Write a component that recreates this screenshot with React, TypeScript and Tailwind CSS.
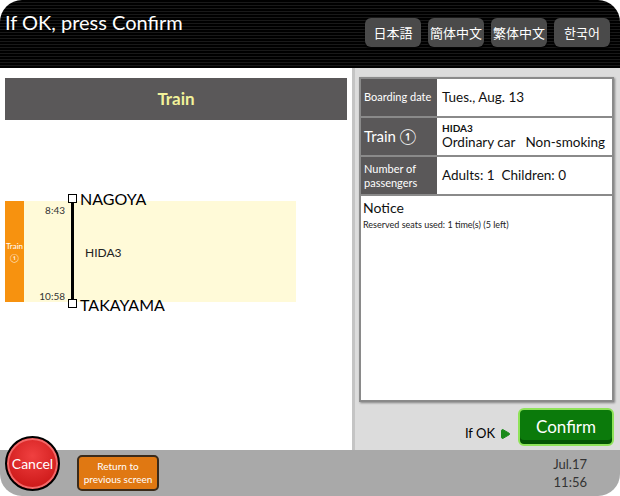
import { Play } from 'lucide-react'

const languages = ['日本語', '簡体中文', '繁体中文', '한국어']

function Header() {
  return (
    <div className="flex h-[68px] shrink-0 items-start justify-between rounded-t-[22px] bg-[repeating-linear-gradient(to_bottom,#000_0px,#000_2px,#191919_2px,#191919_3px)] pl-[5px] pr-[10px]">
      <h1 className="mt-[8px] text-[20px] leading-[28px] text-white">If OK, press Confirm</h1>
      <div className="mt-[18px] flex gap-[7px]">
        {languages.map((lang) => (
          <button
            key={lang}
            className="h-[29px] w-[56px] rounded-[6px] bg-[#4a4a4a] text-[13px] text-white shadow-[0_2px_2px_rgba(0,0,0,0.8)] font-['Noto_Sans_CJK_JP','Noto_Sans_CJK_KR',sans-serif]"
          >
            {lang}
          </button>
        ))}
      </div>
    </div>
  )
}

function Timeline() {
  return (
    <div className="mt-[81px] flex h-[101px]">
      <div className="flex w-[19px] flex-col items-center justify-center bg-[#f7920f] text-[8px] leading-[12px] text-white">
        <span>Train</span>
        <span>①</span>
      </div>
      <div className="relative w-[272px] bg-[#fffad8]">
        <span className="absolute left-0 top-[2px] w-[41px] text-right text-[10px] text-[#333]">8:43</span>
        <span className="absolute left-0 top-[88px] w-[41px] text-right text-[10px] text-[#333]">10:58</span>
        <div className="absolute left-[47px] top-[-3px] h-[107px] w-[3px] bg-black" />
        <div className="absolute left-[44px] top-[-7px] h-[9px] w-[9px] border border-black bg-white" />
        <div className="absolute left-[44px] top-[98px] h-[9px] w-[9px] border border-black bg-white" />
        <span className="absolute left-[56px] top-[-12px] text-[16px] leading-[20px] text-black">NAGOYA</span>
        <span className="absolute left-[56px] top-[94px] text-[16px] leading-[20px] text-black">TAKAYAMA</span>
        <span className="absolute left-[61px] top-[43px] text-[12px] text-[#222]">HIDA3</span>
      </div>
    </div>
  )
}

function LeftPanel() {
  return (
    <div className="w-[352px] shrink-0 bg-white px-[5px] pt-[10px]">
      <div className="flex h-[42px] items-center justify-center bg-[#5a5859] text-[17px] font-bold text-[#f2f29a]">
        Train
      </div>
      <Timeline />
    </div>
  )
}

function Row({ label, children, labelClass }: { label: React.ReactNode; children: React.ReactNode; labelClass: string }) {
  return (
    <div className="flex h-[39px] border-b-2 border-[#8a8a8a]">
      <div className={`flex w-[76px] shrink-0 items-center whitespace-nowrap bg-[#5a5859] px-[3px] text-white ${labelClass}`}>{label}</div>
      <div className="flex flex-1 flex-col justify-center whitespace-nowrap bg-white px-[5px] text-[#111]">{children}</div>
    </div>
  )
}

function RightPanel() {
  return (
    <div className="flex min-w-0 flex-1 flex-col border-l-[3px] border-[#c4c4c4] bg-[#dcdcdc] pl-[4px] pr-[6px] pt-[9px]">
      <div className="flex h-[325px] flex-col border-2 border-[#8a8a8a] bg-white shadow-[1px_1px_2px_rgba(0,0,0,0.4)]">
        <Row label="Boarding date" labelClass="text-[11px]">
          <span className="text-[13.5px]">Tues., Aug. 13</span>
        </Row>
        <Row label="Train ①" labelClass="text-[15px]">
          <span className="text-[10px] font-bold leading-[12px]">HIDA3</span>
          <span className="text-[13.5px] leading-[17px]">Ordinary car&nbsp;&nbsp;&nbsp;Non-smoking</span>
        </Row>
        <Row label={<span className="leading-[14px]">Number of<br />passengers</span>} labelClass="text-[11px]">
          <span className="text-[13.5px]">Adults: 1&nbsp; Children: 0</span>
        </Row>
        <div className="px-[2px] pt-[2px]">
          <div className="text-[14px] leading-[20px] text-[#111]">Notice</div>
          <div className="text-[9px] leading-[14px] text-[#222]">Reserved seats used: 1 time(s) (5 left)</div>
        </div>
      </div>
      <div className="mt-[6px] flex items-center justify-end gap-[7px]">
        <span className="mt-[14px] flex items-center gap-[4px] text-[13px] text-black">
          If OK
          <Play className="h-[12px] w-[12px] fill-[#1a8a1a] text-[#1a8a1a]" />
        </span>
        <button className="h-[38px] w-[96px] rounded-[6px] border-2 border-[#8fe35a] bg-[#0b7a0b] text-[17px] text-white shadow-[inset_0_-4px_0_rgba(0,60,0,0.6)]">
          Confirm
        </button>
      </div>
    </div>
  )
}

function Footer() {
  return (
    <div className="relative flex h-[46px] shrink-0 items-center rounded-b-[22px] bg-[#a9a9a9] pr-[33px]">
      <button className="absolute left-[5px] top-[-14px] flex h-[55px] w-[55px] items-center justify-center rounded-full border-2 border-black bg-[radial-gradient(circle_at_50%_35%,#f04040,#d01c1c_70%)] text-[14px] text-white shadow-[inset_0_0_0_2px_#f26a6a]">
        Cancel
      </button>
      <button className="ml-[77px] h-[36px] w-[82px] rounded-[5px] border-2 border-[#3a2a1a] bg-[#e07812] text-[10px] leading-[13px] text-white">
        Return to<br />previous screen
      </button>
      <div className="ml-auto text-right text-[13px] leading-[18px] text-[#333]">
        <div>Jul.17</div>
        <div>11:56</div>
      </div>
    </div>
  )
}

export default function App() {
  return (
    <div className="flex h-[496px] w-[620px] flex-col overflow-hidden bg-white font-['Lato','Noto_Sans',sans-serif]">
      <Header />
      <div className="flex min-h-0 flex-1">
        <LeftPanel />
        <RightPanel />
      </div>
      <Footer />
    </div>
  )
}
